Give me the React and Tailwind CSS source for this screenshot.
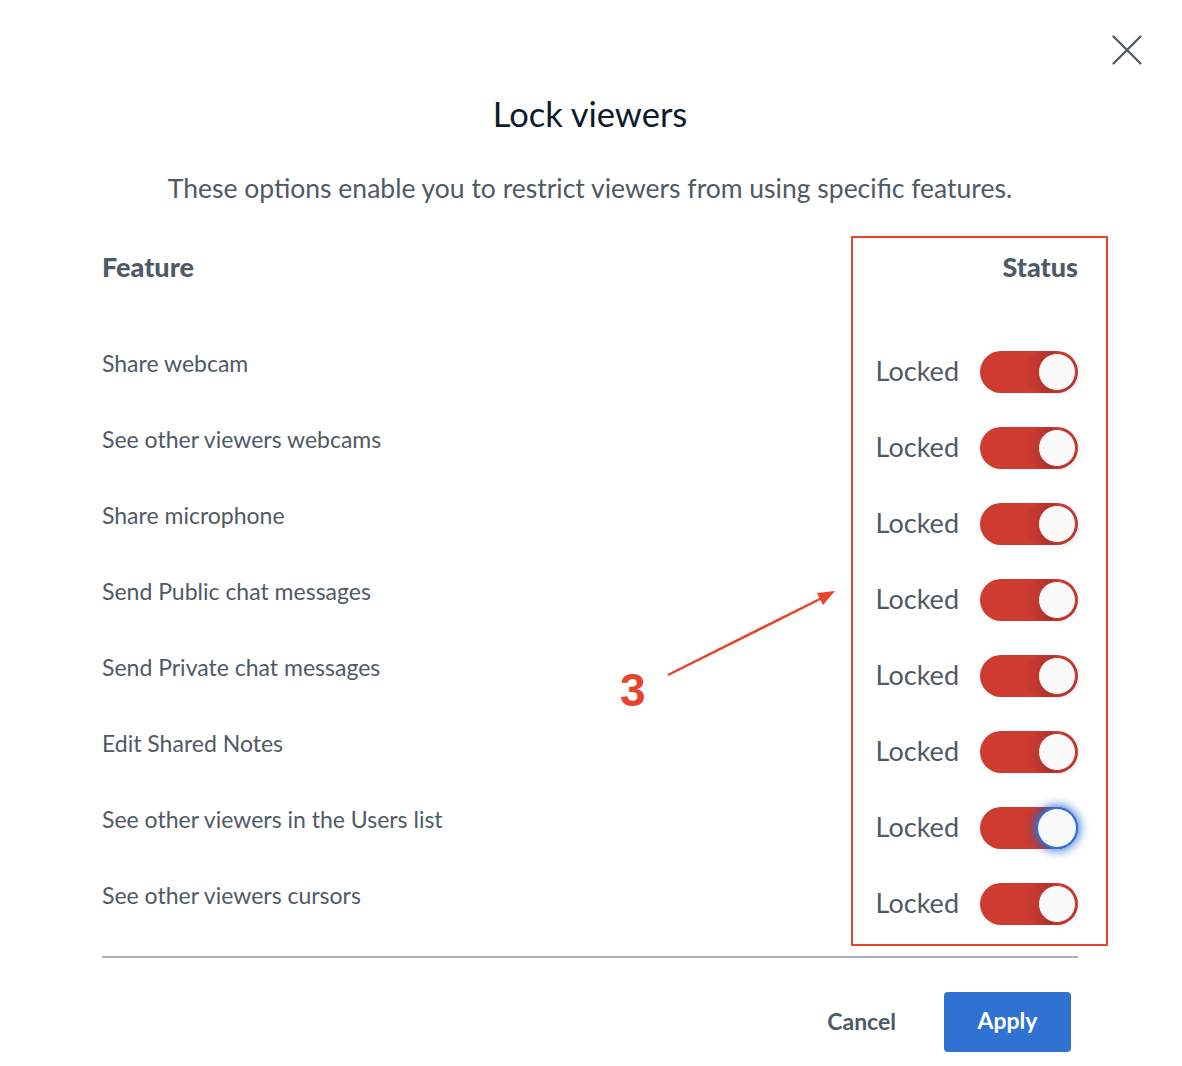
import { X } from 'lucide-react';

const features = [
  'Share webcam',
  'See other viewers webcams',
  'Share microphone',
  'Send Public chat messages',
  'Send Private chat messages',
  'Edit Shared Notes',
  'See other viewers in the Users list',
  'See other viewers cursors',
];

const Toggle = ({ focused }) => (
  <div className="relative w-[98px] h-[42px] rounded-full bg-[#cd3b31]">
    <div className="absolute right-[8px] top-0 w-[46px] h-[42px] rounded-full bg-[linear-gradient(90deg,rgba(0,0,0,0)_0%,rgba(0,0,0,0.12)_60%,rgba(0,0,0,0)_100%)]" />
    <div
      className={
        'absolute right-[2px] top-[2px] w-[38px] h-[38px] rounded-full bg-[#f9f9f9] ' +
        (focused
          ? 'shadow-[0_0_0_2px_#2f6fd6,0_0_8px_5px_rgba(47,111,214,0.75)]'
          : 'border border-[#c9392f] shadow-[2px_2px_6px_rgba(0,0,0,0.12)]')
      }
    />
  </div>
);

export default function App() {
  return (
    <div className="relative w-[1182px] h-[1066px] bg-white font-['Lato',sans-serif] text-[#4e5a66]">
      <button className="absolute right-[28px] top-[23px] text-[#4e5a66]" aria-label="Close">
        <X size={54} strokeWidth={1.0} />
      </button>

      <div className="w-[976px] ml-[102px] pt-[94px]">
        <h1 className="text-center text-[34.5px] leading-[40px] text-[#0d1b2a]">Lock viewers</h1>
        <p className="mt-[38px] text-center text-[26.5px] leading-[32px]">
          These options enable you to restrict viewers from using specific features.
        </p>

        <div className="mt-[47px] flex justify-between text-[27px] leading-[32px] font-black">
          <span>Feature</span>
          <span>Status</span>
        </div>

        <div className="mt-[65px]">
          {features.map((f, i) => (
            <div key={f} className="flex justify-between items-start h-[76px]">
              <span className="text-[23px] leading-[32px] -mt-[1px]">{f}</span>
              <div className="mt-[3px] h-[42px] flex items-center gap-[21px]">
                <span className="text-[27px] leading-[32px] -mt-[2px]">Locked</span>
                <Toggle focused={i === 6} />
              </div>
            </div>
          ))}
        </div>

        <div className="h-[2px] bg-[#a9b2bc]" />

        <div className="mt-[34px] flex justify-end items-center gap-[48px] pr-[7px]">
          <button className="text-[23px] font-bold -mt-[2px]">Cancel</button>
          <button className="w-[127px] h-[60px] rounded-[4px] bg-[#2f72d2] text-white text-[23px] font-bold">
            <span className="relative -top-[2px]">Apply</span>
          </button>
        </div>
      </div>

      {/* annotation overlay */}
      <div className="absolute left-[851px] top-[236px] w-[257px] h-[710px] border-2 border-[#e8432d] pointer-events-none" />
      <svg className="absolute left-0 top-0 pointer-events-none" width="1182" height="1066">
        <line x1="668" y1="675" x2="822" y2="598" stroke="#e8432d" strokeWidth="2.5" />
        <polygon points="835,591 817,593 823,605" fill="#e8432d" />
      </svg>
      <span className="absolute left-[620px] top-[664px] text-[46px] leading-[52px] font-black text-[#e8432d] font-['Liberation_Sans',sans-serif]">
        3
      </span>
    </div>
  );
}
